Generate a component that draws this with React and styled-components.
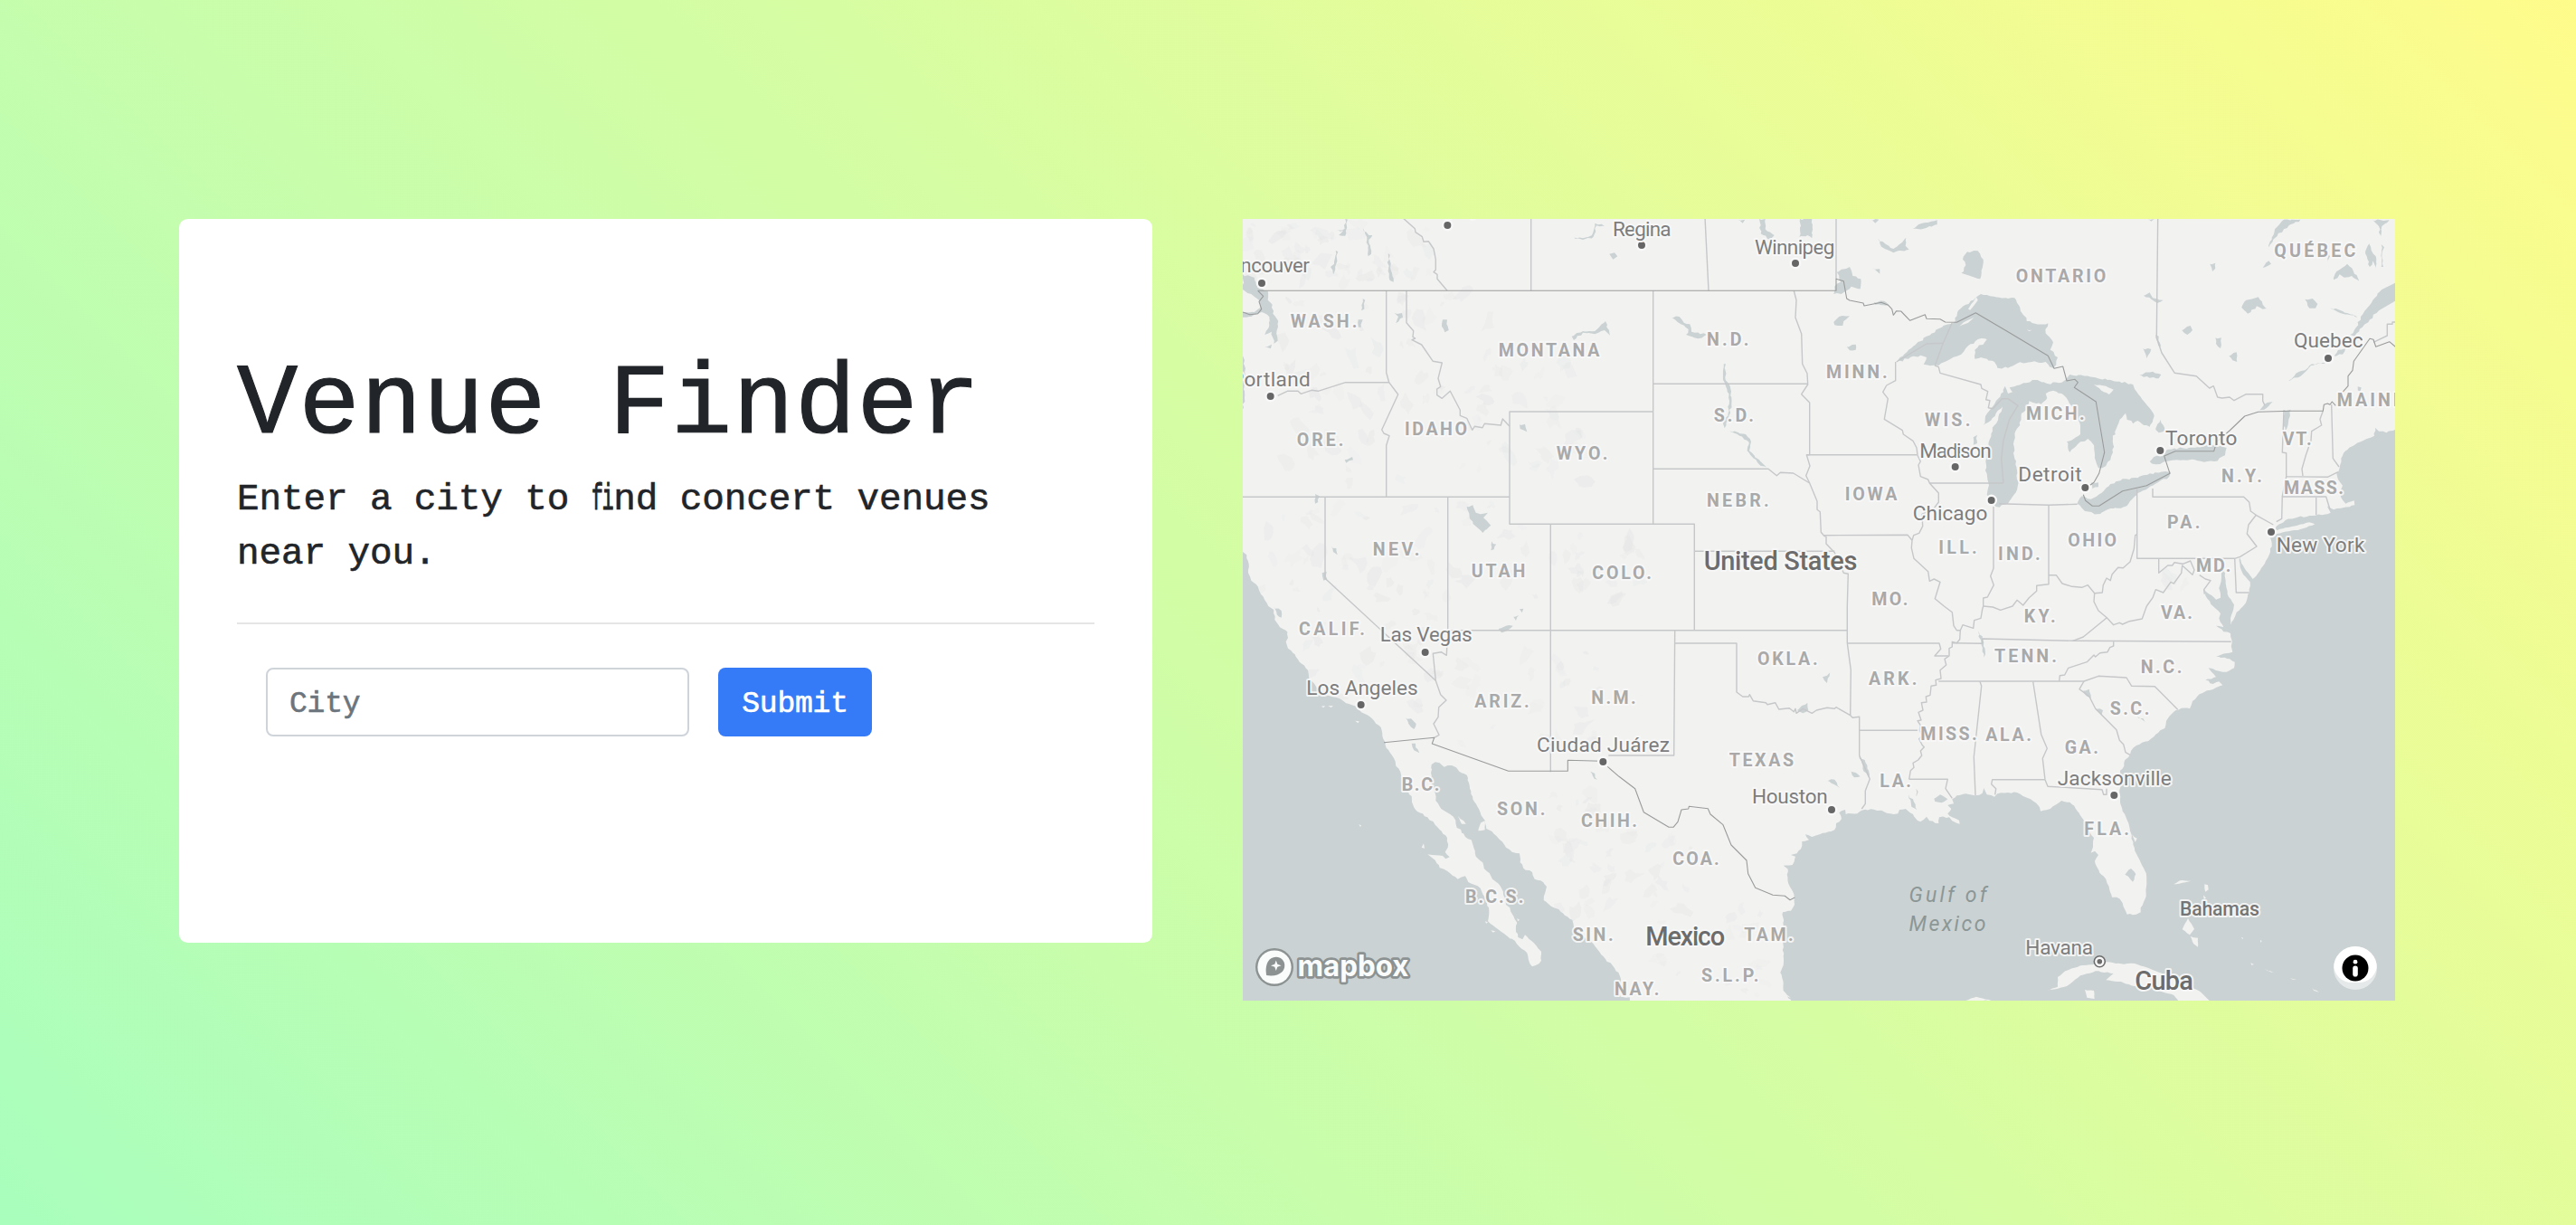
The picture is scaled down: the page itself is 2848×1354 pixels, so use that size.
import React from "react";
import styled, { createGlobalStyle } from "styled-components";

const GlobalStyle = createGlobalStyle`
  *, *::before, *::after { box-sizing: border-box; }
  html, body, #root { height: 100%; }
  body {
    margin: 0;
    color: #212529;
    font-family: "Liberation Mono", "DejaVu Sans Mono", monospace;
    font-size: 33px;
    line-height: 48px;
  }
`;

const Page = styled.main`
  min-height: 100%;
  display: flex;
  align-items: flex-start;
  gap: 100px;
  padding: 242px 198px 0;
  background: linear-gradient(45deg, #a9febd 0%, #fefc8b 100%);
`;

const Panel = styled.section`
  flex: none;
  width: 1076px;
  height: 800px;
  padding: 128px 64px;
  border-radius: 9.6px;
  background: #fff;
`;

const Title = styled.h1`
  height: 134px;
  margin: 0 0 16px;
  padding-top: 12px;
  font-size: 112px;
  font-weight: 400;
  line-height: 134px;
  letter-spacing: 1.35px;
  white-space: nowrap;
  -webkit-text-stroke: 1.2px currentColor;
`;

const Lead = styled.p`
  height: 120px;
  margin: 0 0 32px;
  padding-top: 2px;
  font-size: 41px;
  line-height: 60px;
  letter-spacing: -0.12px;
  -webkit-text-stroke: 0.6px currentColor;
`;

const Ligature = styled.span`
  display: inline-block;
  width: 24.5px;
  transform: scaleX(0.52);
  transform-origin: 0 50%;
  letter-spacing: -2px;
  white-space: nowrap;
  -webkit-text-stroke-width: 1.2px;
`;

const Divider = styled.hr`
  margin: 48px 0;
  border: 0;
  border-top: 2px solid #e5e5e5;
`;

const Form = styled.form`
  display: flex;
  gap: 32px;
  padding-left: 32px;
`;

const controlText = `
  height: 76px;
  font-family: inherit;
  font-size: 33px;
  letter-spacing: -0.22px;
  border-radius: 8px;
  -webkit-text-stroke: 0.6px currentColor;
`;

const CityInput = styled.input`
  ${controlText}
  width: 468px;
  padding: 4px 24px 0;
  border: 2px solid #ced4da;
  background: #fff;
  color: #495057;
  &::placeholder { color: #6c757d; opacity: 1; }
`;

const SubmitButton = styled.button`
  ${controlText}
  width: 170px;
  padding: 4px 0 0;
  border: 0;
  background: #357af6;
  color: #fff;
`;

const MapFrame = styled.section`
  position: relative;
  flex: none;
  width: 1274px;
  height: 864px;
  overflow: hidden;
  background: #f2f2f1;
`;

const MapCanvas = styled.svg`
  display: block;
  width: 100%;
  height: 100%;
`;

const Attribution = styled.button`
  position: absolute;
  right: 20px;
  bottom: 12px;
  width: 48px;
  height: 48px;
  padding: 0;
  border: 0;
  border-radius: 24px;
  overflow: hidden;
  background: rgba(255, 255, 255, 0.5);
`;

const AttributionIcon = styled.svg`
  display: block;
  width: 48px;
  height: 48px;
`;

const ORIGIN = {
  A: [-12, -6], B: [1248, -6], C: [2538, -6],
  D: [-12, 1284], E: [1248, 1284], F: [2538, 1284],
};

/* A trace is a list of points; a letter switches to that sector's origin. */
const trace = (source) => {
  let origin = ORIGIN.A;
  return source.trim().split(/\s+/).reduce((points, token) => {
    if (ORIGIN[token]) {
      origin = ORIGIN[token];
      return points;
    }
    const [x, y] = token.split(",").map(Number);
    return [...points, [(x + origin[0]) / 3, (y + origin[1]) / 3]];
  }, []);
};

const toPath = (source, closed) =>
  "M" + trace(source).map((p) => p.map((n) => n.toFixed(1)).join(" ")).join("L") + (closed ? "Z" : "");

/* Breaks each long edge into small uneven steps, for coast lines. */
const roughen = (source, amount = 1.3) => {
  const pts = trace(source);
  let s = 7;
  const rnd = () => { s = (s * 16807) % 2147483647; return s / 2147483647 - 0.5; };
  const out = [];
  pts.forEach((p, i) => {
    const q = pts[(i + 1) % pts.length];
    out.push(p);
    const d = Math.hypot(q[0] - p[0], q[1] - p[1]);
    const offMap = [p, q].some(([x, y]) => x < -1 || y < -1 || x > 1275 || y > 865);
    const straight = d > 60 || offMap;
    const n = straight ? 0 : Math.floor(d / 3);
    for (let k = 1; k < n; k++) {
      out.push([p[0] + ((q[0] - p[0]) * k) / n + rnd() * amount, p[1] + ((q[1] - p[1]) * k) / n + rnd() * amount]);
    }
  });
  return "M" + out.map((p) => p.map((n) => n.toFixed(1)).join(" ")).join("L") + "Z";
};

const SEAS = [
  `A -20,1110 12,1110 25,1120 32,1150 30,1180 40,1205 62,1225 72,1250 85,1270 97,1290 D 115,12 118,45 135,70 160,85 162,105 155,118 162,140 185,160 200,185 228,212 232,240 250,258 270,290 330,305 355,322 395,332 405,352 440,372 470,402 475,430 485,452 488,470 500,485 518,515 520,530 535,550 545,580 560,615 572,630 573,650 585,675 625,700 650,725 690,768 692,800 683,815 698,832 685,838 675,828 640,825 625,823 650,842 665,868 690,878 725,905 750,895 760,915 800,935 815,965 828,1000 825,1045 850,1065 870,1080 890,1095 915,1110 935,1135 955,1150 962,1180 972,1195 985,1190 1002,1175 1002,1145 985,1125 970,1110 948,1090 940,1105 925,1098 918,1080 918,1060 922,1050 905,1020 898,1000 885,990 880,965 870,935 860,920 840,905 830,885 812,870 808,850 785,830 778,800 770,775 750,765 735,740 722,735 718,710 700,690 670,672 652,645 650,620 640,600 636,570 638,525 650,517 665,520 680,533 705,528 720,535 730,548 755,560 765,605 775,640 785,655 800,685 815,710 820,738 845,755 865,775 885,800 905,815 930,820 932,850 950,875 972,882 980,905 1000,910 1020,930 1015,950 1010,975 1035,995 1060,1005 1080,1025 1105,1040 1110,1065 1135,1090 1175,1120 1190,1140 1215,1170 1245,1200 1262,1225 1265,1250 1262,1275 E 5,1295 35,1297 37,1320 D -20,1320`,
  `E 575,1320 570,1305 545,1275 545,1250 535,1215 545,1190 545,1160 543,1110 545,1060 543,1015 570,1010 582,990 580,955 562,920 557,890 560,872 545,860 575,858 585,830 570,825 590,820 607,795 607,780 630,775 618,757 640,765 665,757 695,748 715,742 720,720 738,705 730,685 750,675 752,690 790,688 805,677 835,673 870,677 900,688 925,688 930,675 950,672 965,685 975,690 985,705 1000,715 1020,698 1030,712 1060,720 1062,700 1095,700 1105,712 1130,722 1128,710 1105,700 1090,688 1102,672 1090,660 1110,655 1105,640 1120,628 1150,622 1180,628 1205,620 1210,603 1220,625 1245,632 1255,622 1290,618 F 30,618 50,630 75,640 100,660 108,680 140,672 160,658 178,645 205,650 235,685 252,710 265,740 285,768 282,790 275,818 288,812 300,825 288,845 295,865 310,890 325,905 335,930 345,965 370,970 380,985 390,1010 395,1022 425,1022 440,1015 440,1000 455,970 460,920 458,885 440,850 425,820 415,790 405,745 400,720 380,680 372,650 370,610 375,580 372,545 385,530 388,510 405,492 415,470 445,452 465,448 490,425 505,412 520,405 525,380 550,350 575,338 603,340 612,315 635,292 660,280 690,270 712,262 700,250 680,258 655,245 690,235 665,205 700,215 725,218 750,205 752,185 735,175 690,167 745,152 738,90 715,85 690,65 715,70 700,40 705,25 680,0 C 655,1255 650,1235 668,1250 690,1268 705,1262 700,1230 708,1195 712,1170 720,1180 722,1215 728,1250 750,1285 F 748,10 738,40 738,62 748,45 758,20 780,0 C 788,1280 800,1245 803,1210 780,1185 770,1160 768,1128 785,1165 812,1200 830,1180 855,1140 870,1110 875,1080 868,1060 882,1050 890,1025 920,1005 960,995 1010,990 1060,985 1070,980 1058,958 1080,970 1105,965 1150,955 1148,940 1120,950 1105,930 1100,915 1110,890 1095,870 1090,850 1100,830 1105,800 1120,775 1150,755 1170,745 1190,735 1215,725 1218,698 1230,710 1255,715 1284,705 1320,700 F 1320,1320`,
];

const LAKES = [
  `B 920,480 960,440 1020,395 1060,370 1115,345 1125,310 1150,290 1175,275 1200,255 1230,262 1290,270 C 22,268 40,300 62,345 90,353 133,352 125,385 150,415 140,440 165,465 160,490 150,500 125,480 80,480 30,485 0,500 B 1255,500 1245,480 1200,465 1180,470 1180,440 1220,405 1190,405 1150,435 1135,455 1080,480 1060,492 1010,488 1020,465 1000,458 960,470`,
  `B 1280,560 1275,580 1250,610 1215,660 1208,690 1225,680 1250,650 1272,628 1268,645 1245,690 1228,740 1218,800 1215,840 1225,880 1220,920 1250,960 1262,962 1290,950 C 20,920 35,880 25,820 20,760 25,710 40,690 45,650 60,640 70,610 110,620 130,600 125,585 150,575 185,590 200,610 225,650 240,690 240,720 210,740 195,745 205,780 220,765 240,745 265,735 280,750 288,790 300,832 325,825 340,805 348,780 348,735 360,700 378,665 390,650 395,672 415,685 430,675 450,690 470,695 485,660 475,640 450,610 420,570 415,555 370,545 330,540 280,530 205,522 190,540 170,550 130,552 90,540 60,550 30,558 5,565 15,580 B 1290,585`,
  `C 275,880 300,880 300,895 280,900`,
  `C 230,950 245,925 275,935 310,915 340,885 380,868 430,865 470,850 540,845 535,860 480,890 430,915 400,950 375,965 330,970 295,985 255,975`,
  `C 470,810 500,785 530,770 600,765 690,755 725,765 720,790 685,810 650,812 620,805 560,805 515,812 490,820`,
  `C 1290,215 1240,240 1210,275 1170,330 1155,365 1135,390 1150,395 1175,365 1200,340 1230,310 1290,275`,
  `C 1082,460 1110,455 1120,435 1095,440`, `C 930,542 970,528 1005,492 1055,482 1008,487 985,508 955,518`,
  `C 1068,300 1100,308 1160,332 1135,325 1095,315`,
  `A 12,190 50,200 62,235 95,245 95,275 110,290 112,320 130,345 125,375 128,410 115,420 108,380 85,390 100,360 100,330 75,315 40,330 12,332 12,315 50,315 70,300 66,275 40,255 12,240`,
  `A 85,432 108,422 105,436`,
  `A 12,460 18,475 20,520 14,540 18,600 10,640`,
  `A 755,960 775,955 785,980 800,985 825,980 810,997 835,1022 808,1047 785,1025 765,1000`,
  `A 838,1075 853,1085 845,1102 835,1105`, `A 305,1090 322,1098 326,1120 312,1110`, `A 275,1180 290,1175 292,1200 280,1205`,
  `A 252,918 266,925 262,945 252,950`, `A 350,805 375,795 378,805 355,815`, `A 930,688 948,686 955,712 932,702`,
  `A 675,340 690,340 695,375 682,382 672,362`, `A 515,318 540,318 543,332 520,352 528,330`,
  `A 410,270 418,275 415,305 405,310`, `A 395,340 410,340 405,365 395,365`, `A 320,110 328,115 322,155 312,190 303,165 315,155`,
  `A 494,120 500,125 503,175 512,215 500,210 494,180`, `A 410,35 430,60 442,60 430,75 438,122 428,130 424,75`,
  `A 352,5 360,8 352,62 330,60 345,45 318,47 350,38`, `A 1228,122 1245,118 1255,130 1240,140`,
  `A 1110,68 1140,70 1170,60 1180,20 1212,30 1185,28 1175,65 1140,75`,
  `A 1103,395 1140,378 1180,378 1215,345 1230,392 1212,375 1180,388 1140,383 1110,408`,
  `B 172,332 200,330 215,350 235,355 240,380 290,390 262,403 222,390 230,372 205,355`,
  `B 347,487 354,487 353,540 368,560 373,620 362,665 350,700 345,685 362,650 366,610 358,570 345,540`,
  `B 367,708 420,720 438,745 432,775 490,830 470,825 425,775 430,745 400,725`,
  `B 465,6 485,6 485,40 515,60 500,75 470,55`, `B 600,6 640,6 640,70 625,60 598,65 600,35`,
  `B 395,8 418,8 410,20`, `B 835,8 862,8 850,20`, `B 975,38 1005,20 1055,10 1055,25 1010,38`,
  `B 858,70 885,90 910,105 930,90 952,68 950,95 962,108 925,112 910,118 870,98`,
  `B 840,168 865,172 865,188`, `B 1155,115 1190,112 1208,140 1198,205 1165,195 1135,185 1150,160 1140,140`,
  `B 722,182 765,165 775,195 802,205 800,238 770,230 745,250 712,255 715,230 735,215`,
  `B 845,282 880,278 895,292 850,290`, `B 712,348 730,330 765,328 745,345 742,360 715,358`, `B 755,430 785,422 785,440 765,442`,
  `B 1175,730 1188,722 1188,750 1175,755`,
  `C 865,100 885,40 915,8 970,8 915,40 885,70`, `C 845,168 865,145 873,155`, `C 670,155 688,152 688,170 678,180`,
  `C 450,260 470,250 480,268 515,275 495,285 475,272`, `C 775,300 790,275 830,265 845,290 865,308 845,305 825,295 795,320`,
  `C 985,272 1010,270 1027,288 1020,302 1000,302`, `C 577,375 605,360 612,375 595,390`, `C 688,400 708,400 705,435 690,420`,
  `C 733,460 758,448 760,480 745,475`, `C 448,435 475,438 460,468`, `C 437,522 480,512 508,522 500,535 450,530`,
  `C 490,390 500,395 508,430 498,425`, `C 1080,208 1090,180 1125,155 1145,178 1165,212 1140,195 1115,200 1100,190`,
  `C 1185,120 1198,88 1205,110 1220,130 1220,175 1210,145 1200,165`, `C 1238,90 1248,100 1240,130 1245,165 1238,165`,
  `C 1210,10 1265,10 1240,30 1235,70 1230,30`, `C 490,705 505,672 515,690 520,708 500,715`, `C 1160,562 1172,565 1168,580`,
  `C 915,640 938,638 930,680 920,710 912,680`, `C 835,640 860,615 878,612 850,638`, `C 1060,120 1068,130 1062,150`,
  `C 465,6 485,6 475,14`,
  `D 552,370 570,373 587,390 580,408 562,390`, `D 572,455 585,455 598,487 580,478`, `D 860,75 885,65 908,65 890,80 870,88`,
  `D 910,35 928,30 918,48`, `D 930,10 943,8 938,22`, `D 1165,548 1180,555 1188,575 1178,572`,
  `D 115,0 140,15 140,38 125,28`,
  `E 675,235 690,230 705,215 692,240 690,255`, `E 590,345 625,320 628,345 610,355`, `E 797,495 815,510 828,545 830,570 812,548`,
  `E 763,540 785,552 800,565 780,568`, `E 685,578 715,575 732,603 712,590`,
  `E 1190,80 1205,100 1215,160 1210,170 1202,130`, `E 1045,638 1065,625 1090,640 1070,652 1048,648`,
  `E 960,625 975,640 988,675 970,665`, `E 985,605 992,615 988,640`,
  `F 250,280 270,275 275,305 260,298`, `F 288,335 315,345 310,362`, `F 428,366 448,372 455,384`, `F 388,890 408,870 424,888 414,914`,
  `D 735,735 745,740 755,760 738,752`,
];

const ISLANDS = [
  `C 885,1040 920,1030 960,1022 1000,1012 1018,1018 970,1035 930,1042 890,1050`,
  `C 285,555 325,560 350,572 335,588 310,575`, `B 1128,362 1150,345 1177,332 1158,350`, `B 1158,305 1185,265 1190,275 1165,308`,
  `F 130,1275 165,1262 165,1230 190,1210 240,1192 300,1185 330,1180 385,1187 420,1185 450,1195 490,1210 560,1240 640,1280 680,1320 575,1320 550,1290 470,1265 420,1260 375,1245 325,1240 350,1218 290,1210 240,1225 215,1245 195,1260 165,1268`,
  `F 255,1272 285,1275 287,1302 262,1298`, `F 578,1072 597,1035 618,1070 603,1090`, `F 605,1095 630,1100 630,1130 616,1120`,
  `F 550,922 570,910 607,911 568,920`, `F 652,922 663,925 665,940 655,947`, `F 648,958 657,968 650,972`,
  `F 774,1098 780,1100 778,1105`, `F 837,1107 842,1110 838,1116`, `F 805,1183 816,1188 808,1190`, `F 852,1203 882,1216 868,1212`,
  `F 935,1234 958,1236 945,1238`, `F 1008,1266 1032,1280 1015,1275`, `F 412,757 428,770 422,782`,
  `D 725,695 745,712 752,722 738,722`, `D 793,745 802,718 815,712 815,742`, `D 605,800 612,787 615,803`,
  `D 272,332 285,330 280,337`, `D 295,331 312,330 305,336`, `D 385,380 398,382 394,388`, `D 397,724 405,727 402,732`,
  `D 815,1045 825,1048 820,1052`, `D 835,1075 850,1078 842,1082`, `D 922,1035 930,1040 924,1045`, `C 62,373 80,374 70,378`,
  `E 1150,1308 1185,1295 1235,1308`, `E 545,1278 570,1300 555,1292`,
];

const COUNTRY_LINES = [
  `A 62,244 B 720,244 720,205 745,212 755,270 765,276 810,285 813,294 870,283 893,292 905,305 910,325 920,311 935,312 965,343 1015,323 1020,337 1065,338 1082,348 1120,349 1183,317 1290,380 C 133,460 153,502 182,495 195,543 222,538 232,548 220,565 292,612 320,780 302,850 285,880 270,890`,
  `C 250,920 257,940 280,958 302,958 380,908 460,890 537,850 518,792 555,776 683,776 692,745 735,708 785,660 830,646 940,643 1045,643 1048,622 1060,618 1068,622 1075,612 1087,625`,
  `C 1110,580 1128,560 1128,527 1143,508 1147,478 1200,403 1212,406 1220,430 1265,413 1290,434`,
  `A 62,244 80,262 66,280 74,305 62,320 35,323 12,315`,
  `D 480,452 647,436 640,456 893,547 1090,547 1090,511 1200,514`,
  `D 1222,532 E 0,565 53,605 82,683 165,733 180,733 195,715 207,675 230,672 232,664 295,671 303,690 345,725 372,792 423,843 428,887 452,934 510,958 550,961 567,974 583,966`,
];

const STATE_LINES = [
  `A 488,244 488,515 497,548 527,588 473,705 480,717 498,725 488,757 488,928`,
  `A 128,592 160,577 195,577 205,586 240,574 262,577 353,548 497,548`,
  `A 555,244 555,350 578,377 576,397 584,402 573,407 605,423 643,478 673,483 660,535 668,562 656,570 656,590 673,601 700,577 733,640 733,658 755,667 773,706 781,694 807,698 814,685 868,690 874,669 897,694`,
  `B 113,645 A 897,645 897,1018 B 250,1018 E 250,80`, `A 12,928 897,928`,
  `A 285,928 285,1198 D 385,0 652,247 668,293 687,312 662,335 660,368 645,390 663,427 647,436`,
  `A 692,928 D 692,78 688,163 670,152 643,157 652,247`, `A 1033,1018 D 1033,550`, `D 692,80 E 757,80`,
  `B 113,244 113,1018`, `B 113,553 626,553`, `B 113,835 495,835 523,857 535,847 578,849 632,882`,
  `B 580,244 588,275 585,333 605,387 608,487 624,518 626,555 605,587 632,615 632,788`, `B 622,788 988,788`,
  `B 632,788 622,788 633,825 620,857 632,882 657,942 657,970 667,977 670,1045 680,1057 687,1060 687,1083 715,1112 745,1180 760,1183 E 757,0 757,122 769,212 767,362`,
  `B 250,1108 715,1108`, `B 680,1055 957,1054 972,1072`,
  `B 917,480 917,542 887,558 875,580 892,602 880,670 940,707 943,720 975,742 987,765 990,790 1000,810 993,822 1000,860 1025,870 1030,882 1060,915 1060,945 1045,965 1005,985 1007,1025 995,1048 977,1055 972,1072 970,1097 978,1132 1025,1175 1030,1207 1045,1200 1065,1210 1048,1265 1078,1290 E 1105,20 1110,65 1120,80 1132,80 1130,110 1120,122 1105,118 1105,135 1095,140 1095,165 1080,175 1085,195 1065,212 1068,240 1050,245 1052,262 1035,265 1032,295 1018,300 1020,318 1003,320 1008,345 993,352 1002,378 990,380 1000,395 997,412 1005,430 995,440 1005,460 1012,467 1000,480 1004,495 992,510 975,520 978,535 967,545 962,574`,
  `B 920,480 1020,420 1075,418 1105,350`,
  `B 1075,418 1048,492 1060,497 1065,517 1200,555 1203,568 1223,578 1217,605 1230,608 1225,632 1240,635 1270,602 C 0,602 33,625 5,670 B 1275,740 1268,800 1275,882`,
  `B 1030,882 1275,882`, `B 1242,960 1242,1165 1232,1190 1243,1220 1222,1260 1208,1263 1208,1290 E 1205,10 1200,40 1178,47 1175,73 1140,62 1132,80`,
  `E 1208,0 1240,3 1265,13 C 15,1290 30,1270 50,1287 70,1262 95,1240 95,1222 135,1217 135,955`,
  `C 135,1187 160,1187 180,1215 212,1225 245,1228 265,1220 287,1247 313,1245 316,1220 327,1197 340,1205 345,1185 365,1162 382,1163 405,1143 418,1100 422,1055 428,1052`,
  `B 1260,950 C 135,955 230,952`, `C 428,900 428,1132 752,1132`,
  `C 480,900 480,928 782,928 800,945 805,975 823,988 798,1020 793,1050 825,1092 770,1126 752,1132 757,1245 800,1245`,
  `C 823,988 880,1020`, `C 500,1132 500,1180 530,1155 545,1155 552,1145 580,1150 605,1140 618,1170 612,1186 578,1155 575,1180 550,1215 540,1210 515,1245 490,1235 480,1262 460,1290 F 445,42 403,50 380,60 370,55 350,62 328,38 250,102 215,115`,
  `C 635,1187 655,1200 672,1205 650,1235 652,1250`, `C 287,1247 285,1275 F 300,15 328,38`,
  `C 915,640 910,780 923,782 923,860 1060,862 1095,845`, `C 1045,643 1035,670 1040,690 1007,710 1005,740 988,790 975,835 978,858`,
  `C 1073,622 1078,800 1098,828`, `C 923,860 910,925 908,1000 890,1010`, `C 910,927 1055,927 1068,970`, `C 1022,930 1022,988`,
  `C 497,0 493,400 510,450 553,517 625,527 668,567 682,560 695,597 710,600 735,597 750,608 790,587 845,587 845,610 852,625`,
  `C 1212,415 1258,393 1258,355 1275,355 1275,348 1290,348`, `A 968,0 968,244`, `B 285,0 297,244`, `B 720,0 720,205`,
  `A 540,0 583,38 585,50 607,65 612,82 628,80 645,105 652,140 652,175 645,182 657,190 657,205 690,244`,
  `E 1105,122 1205,124 1205,108 F 215,115 740,118`, `E 1060,249 F 170,249 172,230 188,228 200,205 262,185 285,162 290,168 305,155 330,152 338,137 350,132 350,118`,
  `F 170,249 252,249 300,232 393,237 410,265 487,266 563,343`, `F 252,249 237,275 270,300 290,340 360,410 370,445 383,458 390,485 405,493`,
  `F 83,250 110,425 130,472 115,505 123,575 132,598 312,608 317,625 327,625 327,605`,
  `F 123,575 E 1238,575 1235,590 1250,605 1247,625`, `E 1197,250 1202,265 1177,500 1182,628`,
  `E 962,574 1090,574 1083,605 1105,637`, `E 797,412 990,412`, `E 185,80 182,495 D 1225,495`,
  `E 185,123 390,123 390,285 410,300 430,300 433,293 445,314 487,320 492,326 518,320 530,342 565,338 580,350 585,340 588,355 610,340 640,355 655,345 690,337 715,340 720,335 767,362 775,370 797,367 797,495 832,573 817,612 817,655 805,672`,
  `E 757,123 1062,123 1067,142 1047,165 1093,165`,
];

const LABEL_STYLES = {
  state: { size: 19.6, weight: 700, fill: "#a9a9a9" },
  city: { size: 22.6, weight: 400, fill: "#7d7d7d" },
  country: { size: 29, weight: 500, fill: "#6c6c6c" },
  island: { size: 21.4, weight: 500, fill: "#757575" },
};

/* style, sector, text, left, right, baseline */
const LABELS = [
  ["state", "A", "WASH.", 173, 388, 365], ["state", "A", "MONTANA", 863, 1192, 462], ["state", "A", "ORE.", 194, 343, 759],
  ["state", "A", "IDAHO", 552, 753, 724], ["state", "A", "WYO.", 1055, 1219, 804], ["state", "A", "NEV.", 446, 595, 1122],
  ["state", "A", "UTAH", 773, 946, 1195], ["state", "A", "COLO.", 1174, 1365, 1200], ["state", "B", "N.D.", 294, 427, 425],
  ["state", "B", "S.D.", 317, 444, 679], ["state", "B", "MINN.", 690, 887, 534], ["state", "B", "WIS.", 1017, 1162, 693],
  ["state", "B", "IOWA", 752, 919, 939], ["state", "B", "NEBR.", 294, 494, 961], ["state", "B", "ILL.", 1063, 1184, 1116],
  ["state", "B", "MO.", 841, 955, 1288], ["state", "C", "IND.", -30, 104, 1137], ["state", "C", "ONTARIO", 29, 322, 216],
  ["state", "C", "QUÉBEC", 886, 1150, 132], ["state", "C", "MICH.", 63, 251, 672], ["state", "C", "MAINE", 1094, 1308, 627],
  ["state", "C", "VT.", 914, 1004, 756], ["state", "C", "N.Y.", 711, 840, 879], ["state", "C", "MASS.", 918, 1110, 918],
  ["state", "C", "PA.", 531, 634, 1032], ["state", "C", "OHIO", 202, 357, 1091], ["state", "C", "MD.", 627, 736, 1175],
  ["state", "D", "CALIF.", 201, 414, 95], ["state", "D", "ARIZ.", 784, 959, 335], ["state", "D", "N.M.", 1171, 1313, 325],
  ["state", "D", "B.C.", 542, 661, 612], ["state", "D", "SON.", 858, 1012, 694], ["state", "D", "CHIH.", 1137, 1317, 733],
  ["state", "D", "B.C.S.", 753, 940, 983], ["state", "D", "SIN.", 1109, 1238, 1110], ["state", "D", "NAY.", 1248, 1390, 1291],
  ["state", "E", "OKLA.", 462, 656, 195], ["state", "E", "ARK.", 831, 985, 262], ["state", "E", "TEXAS", 368, 576, 531],
  ["state", "E", "LA.", 868, 966, 600], ["state", "E", "MISS.", 1003, 1184, 445], ["state", "E", "ALA.", 1219, 1365, 446],
  ["state", "E", "COA.", 181, 329, 858], ["state", "E", "TAM.", 418, 575, 1110], ["state", "E", "S.L.P.", 276, 460, 1245],
  ["state", "F", "KY.", 56, 155, 55], ["state", "F", "VA.", 510, 609, 42], ["state", "F", "TENN.", -42, 159, 186],
  ["state", "F", "N.C.", 443, 574, 223], ["state", "F", "S.C.", 341, 466, 360], ["state", "F", "GA.", 191, 297, 488],
  ["state", "F", "FLA.", 256, 399, 758],
  ["city", "A", "Vancouver", -68, 231, 184], ["city", "A", "Portland", -24, 233, 561], ["city", "A", "Calgary", 585, 796, -8],
  ["city", "B", "Regina", -18, 170, 62], ["city", "B", "Winnipeg", 453, 712, 122], ["city", "B", "Madison", 1000, 1232, 797],
  ["city", "B", "Chicago", 977, 1219, 1006], ["city", "C", "Quebec", 951, 1175, 433], ["city", "C", "Toronto", 525, 757, 755],
  ["city", "C", "Detroit", 37, 242, 876], ["city", "C", "New York", 893, 1180, 1110], ["city", "D", "Las Vegas", 470, 770, 118],
  ["city", "D", "Los Angeles", 226, 590, 294], ["city", "D", "Ciudad Juárez", 990, 1425, 483], ["city", "E", "Houston", 444, 689, 654],
  ["city", "F", "Jacksonville", 167, 539, 595], ["city", "F", "Havana", 61, 279, 1156],
  ["country", "B", "United States", 284, 787, 1170], ["country", "E", "Mexico", 91, 349, 1126], ["country", "F", "Cuba", 424, 612, 1273],
  ["island", "F", "Bahamas", 573, 831, 1026],
];

const CITY_DOTS = trace(`A 75,219 104,594 691,27 B 75,93 585,153 1115,828 1235,939 C 1062,468 505,774 256,897 873,1044 D 617,153 404,327 1207,516 E 705,675 F 352,627`);

/* Faint mountain shading over the west and Mexico: [sector, x, y, width, height, count] */
const RANGES = [
  ["A", 20, 20, 640, 200, 50], ["A", 130, 260, 700, 620, 60], ["A", 800, 480, 380, 400, 28], ["A", 60, 950, 1000, 320, 52],
  ["D", 160, 10, 500, 330, 26], ["D", 700, 90, 500, 400, 24], ["A", 1080, 1040, 260, 240, 18], ["D", 1030, 620, 220, 420, 28],
  ["E", 20, 700, 220, 560, 20], ["E", 330, 980, 160, 320, 14], ["C", 480, 1180, 110, 100, 5],
];
const SHADES = (() => {
  let s = 41;
  const rnd = () => { s = (s * 16807) % 2147483647; return s / 2147483647; };
  return RANGES.flatMap(([tile, x, y, w, h, n]) =>
    Array.from({ length: n }, () => {
      const cx = x + rnd() * w, cy = y + rnd() * h, r = 8 + rnd() * 26, tilt = rnd() * 3.1;
      const pts = Array.from({ length: 9 }, (_, i) => {
        const a = (i / 9) * Math.PI * 2, q = r * (0.4 + rnd() * 0.9);
        const px = Math.cos(a) * q * 1.2, py = Math.sin(a) * q * 0.7;
        return `${cx + px * Math.cos(tilt) - py * Math.sin(tilt)},${cy + px * Math.sin(tilt) + py * Math.cos(tilt)}`;
      });
      return { d: toPath(`${tile} ${pts.join(" ")}`, true), o: 0.12 + rnd() * 0.3 };
    })
  );
})();

function Label({ item }) {
  const [kind, tile, text, left, right, base] = item;
  const { size, weight, fill } = LABEL_STYLES[kind];
  const [ox, oy] = ORIGIN[tile];
  return (
    <text
      x={(left + ox) / 3 - 1} y={(base + oy) / 3} textLength={(right - left) / 3 + 2} fontSize={size} fontWeight={weight} fill={fill}
      stroke="#f8f8f8" strokeOpacity="0.9" strokeWidth="4" strokeLinejoin="round" paintOrder="stroke"
    >
      {text}
    </text>
  );
}

function MapboxLogo() {
  return (
    <g>
      <circle cx="35" cy="827" r="21" fill="#8b9291" />
      <circle cx="35" cy="827" r="18.6" fill="#fafbfb" />
      <path d="M26.2 836C24.8 829 26 822.4 29.8 818.6C33.8 814.9 40 814.9 43.6 818.4C47.2 822 47.2 828.2 43.4 832.2C39.6 836 33 837.2 26.2 836Z" fill="#8b9291" />
      <path d="M36.8 819.4L38.3 823.7L42.6 825.2L38.3 826.7L36.8 831L35.3 826.7L31 825.2L35.3 823.7Z" fill="#fafbfb" />
      <text
        x="60.5" y="837" textLength="123" lengthAdjust="spacingAndGlyphs" fontFamily="Inter, sans-serif" fontSize="33" fontWeight="700"
        fill="#fafbfb" stroke="#8b9291" strokeWidth="5.4" strokeLinejoin="round" paintOrder="stroke"
      >
        mapbox
      </text>
    </g>
  );
}

function VenueMap() {
  return (
    <MapFrame aria-label="Map">
      <MapCanvas viewBox="0 0 1274 864" fontFamily="Roboto, sans-serif">
        {SHADES.map((s, i) => <path key={i} d={s.d} fill="#e4e5e5" opacity={s.o} />)}
        <g fill="#cbd2d3">
          {SEAS.map((s, i) => <path key={i} d={roughen(s, 1.6)} />)}
          {LAKES.map((s, i) => <path key={i} d={roughen(s, 2.4)} />)}
        </g>
        <g fill="#f2f2f1">{ISLANDS.map((s, i) => <path key={i} d={roughen(s, 1)} />)}</g>
        <g fill="none" stroke="#c6c7c9" strokeWidth="1.4" strokeLinejoin="round">
          {STATE_LINES.map((s, i) => <path key={i} d={toPath(s)} />)}
        </g>
        <g fill="none" stroke="#9a9c9c" strokeWidth="1.1" strokeLinejoin="round">
          {COUNTRY_LINES.map((s, i) => <path key={i} d={toPath(s)} />)}
        </g>
        {CITY_DOTS.map(([x, y]) => (
          <circle key={`${x},${y}`} cx={x} cy={y} r="5.2" fill="#666" stroke="#f8f8f8" strokeWidth="2.4" />
        ))}
        <circle cx="947.3" cy="820.8" r="6" fill="#f8f8f8" stroke="#6c6c6c" strokeWidth="1.6" />
        <circle cx="947.3" cy="820.8" r="2.8" fill="#6c6c6c" />
        <g fill="#8b9796" fontSize="23" fontStyle="italic">
          <text x="736.5" y="755" textLength="86">Gulf of</text>
          <text x="736.5" y="786.5" textLength="85">Mexico</text>
        </g>
        {LABELS.map((item) => <Label key={item[1] + item[2]} item={item} />)}
        <MapboxLogo />
      </MapCanvas>
      <Attribution type="button" aria-label="Attribution">
        <AttributionIcon viewBox="0 0 48 48">
          <rect width="48" height="40" rx="20" fill="#fff" />
          <circle cx="24" cy="24" r="14.5" />
          <circle cx="24" cy="17.2" r="2.4" fill="#fff" />
          <rect x="21.2" y="21.6" width="5.6" height="12" rx="2.8" fill="#fff" />
        </AttributionIcon>
      </Attribution>
    </MapFrame>
  );
}

export default function App() {
  return (
    <>
      <GlobalStyle />
      <Page>
        <Panel>
          <Title>Venue Finder</Title>
          <Lead>Enter a city to <Ligature>fi</Ligature>nd concert venues near you.</Lead>
          <Divider />
          <Form onSubmit={(event) => event.preventDefault()}>
            <CityInput placeholder="City" aria-label="City" />
            <SubmitButton type="submit">Submit</SubmitButton>
          </Form>
        </Panel>
        <VenueMap />
      </Page>
    </>
  );
}
